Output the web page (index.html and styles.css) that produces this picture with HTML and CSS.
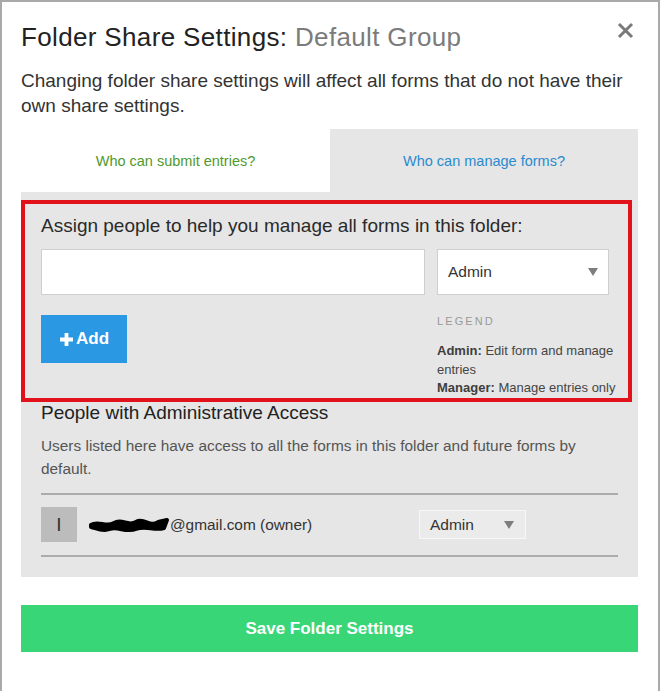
FILE: index.html
```html
<!DOCTYPE html>
<html lang="en">
<head>
<meta charset="utf-8">
<title>Folder Share Settings</title>
<link rel="stylesheet" href="styles.css">
</head>
<body>
<div class="modal">
  <header class="modal-head">
    <h1 class="title">Folder Share Settings: <span class="title-muted">Default Group</span></h1>
    <button class="close" aria-label="Close">
      <svg width="17" height="17" viewBox="0 0 17 17"><path d="M2 2 L15 15 M15 2 L2 15" stroke="#7a7a7a" stroke-width="3" stroke-linecap="butt"/></svg>
    </button>
  </header>
  <p class="intro">Changing folder share settings will affect all forms that do not have their own share settings.</p>

  <div class="panel">
    <div class="tabs">
      <div class="tab tab-active">Who can submit entries?</div>
      <div class="tab tab-manage">Who can manage forms?</div>
    </div>

    <section class="assign">
      <h2 class="assign-title">Assign people to help you manage all forms in this folder:</h2>
      <div class="assign-row">
        <div class="text-input"></div>
        <div class="select select-large"><span>Admin</span><span class="caret"></span></div>
      </div>
      <div class="assign-row2">
        <div><button class="add-btn"><svg width="13" height="13" viewBox="0 0 13 13"><path d="M4.6 0h3.8v4.6H13v3.8H8.4V13H4.6V8.4H0V4.6h4.6z" fill="#fff"/></svg>Add</button></div>
        <div class="legend">
          <div class="legend-title">LEGEND</div>
          <div class="legend-item"><b>Admin:</b> <span>Edit form and manage</span> <span>entries</span></div>
          <div class="legend-item"><b>Manager:</b> <span>Manage entries only</span></div>
        </div>
      </div>
    </section>

    <section class="admins">
      <h3 class="admins-title">People with Administrative Access</h3>
      <p class="admins-desc">Users listed here have access to all the forms in this folder and future forms by default.</p>
      <div class="user-row">
        <div class="avatar">I</div>
        <div class="email"><svg class="redact" width="82" height="18" viewBox="0 0 82 18"><path d="M3 9 C10 4, 18 12, 26 7 S40 11, 48 6 S62 12, 70 6 L79 4 L76 12 C66 15, 58 9, 48 13 S30 10, 22 13 S8 12, 3 11 Z" fill="#000" stroke="#000" stroke-width="4" stroke-linejoin="round"/></svg>@gmail.com (owner)</div>
        <div class="select select-small"><span>Admin</span><span class="caret"></span></div>
      </div>
    </section>
  </div>

  <button class="save">Save Folder Settings</button>
</div>
</body>
</html>
```
FILE: styles.css
```css
* { box-sizing: border-box; }
html, body { margin: 0; padding: 0; background: #fff; }
body { font-family: "Liberation Sans", Arial, sans-serif; color: #222; }

.modal {
  width: 660px;
  height: 691px;
  border: 2px solid #a9a9a9;
  border-bottom: none;
  padding: 20px 20px 0 19px;
  background: #fff;
}

.modal-head {
  display: flex;
  justify-content: space-between;
  align-items: flex-start;
}
.title {
  margin: 0;
  font-size: 26px;
  line-height: 30px;
  font-weight: normal;
  letter-spacing: 0.35px;
  color: #222;
}
.title-muted { color: #7b7b7b; }
.close {
  border: 0;
  background: none;
  padding: 0;
  margin: 0 4px 0 0;
  width: 17px;
  height: 17px;
  display: block;
}
.close svg { display: block; }

.intro {
  margin: 16px 0 11px;
  font-size: 19px;
  line-height: 25px;
  color: #333;
}

.panel {
  background: #e6e6e6;
  height: 448px;
  padding-bottom: 19px;
}

.tabs {
  display: grid;
  grid-template-columns: 309px 1fr;
  height: 63px;
}
.tab {
  display: flex;
  align-items: center;
  justify-content: center;
  font-size: 14.5px;
}
.tab-active { background: #fff; color: #4f9a2c; }
.tab-manage { color: #2a8bcf; }

.assign {
  margin: 8px 6px 0 0;
  border: 4px solid #e1121c;
  padding: 10px 15px 0 16px;
}
.assign-title {
  margin: 0;
  font-size: 19px;
  line-height: 23px;
  font-weight: normal;
  color: #2a2a2a;
}
.assign-row {
  display: grid;
  grid-template-columns: 384px 172px;
  gap: 12px;
  margin-top: 12px;
}
.text-input {
  height: 46px;
  background: #fff;
  border: 1px solid #cfcfcf;
}
.select {
  display: flex;
  align-items: center;
  justify-content: space-between;
  color: #333;
}
.select-large {
  height: 46px;
  background: #fff;
  border: 1px solid #cfcfcf;
  padding: 0 10px 0 10px;
  font-size: 15.5px;
}
.caret {
  width: 0;
  height: 0;
  border-left: 5px solid transparent;
  border-right: 5px solid transparent;
  border-top: 8px solid #7d7d7d;
}

.assign-row2 {
  display: grid;
  grid-template-columns: 384px 1fr;
  gap: 12px;
  margin-top: 20px;
  margin-right: -12px;
}
.add-btn {
  display: flex;
  align-items: center;
  gap: 3px;
  width: 86px;
  height: 48px;
  border: 0;
  background: #2b98e3;
  color: #fff;
  font-family: "Liberation Sans", Arial, sans-serif;
  font-weight: bold;
  font-size: 17px;
  padding: 0 0 0 19px;
}
.legend-title {
  font-size: 11px;
  line-height: 13px;
  letter-spacing: 2.1px;
  color: #9a9a9a;
  margin-bottom: 14px;
}
.legend-item {
  font-size: 13px;
  line-height: 18.7px;
  color: #454545;
}
.legend-item b { color: #3e3e3e; }

.admins {
  padding: 0 20px 0 20px;
}
.admins-title {
  margin: 0;
  font-size: 19px;
  line-height: 21px;
  font-weight: normal;
  color: #222;
}
.admins-desc {
  margin: 11px 0 13px;
  font-size: 15.4px;
  line-height: 23px;
  color: #555;
}
.user-row {
  display: grid;
  grid-template-columns: 36px 320px 107px;
  column-gap: 11px;
  align-items: center;
  border-top: 2px solid #acacac;
  border-bottom: 2px solid #acacac;
  padding: 12px 0 13px;
}
.avatar {
  width: 36px;
  height: 35px;
  background: #bcbcbc;
  color: #333;
  font-size: 19px;
  display: flex;
  align-items: center;
  justify-content: center;
}
.email {
  display: flex;
  align-items: center;
  font-size: 15.4px;
  color: #333;
}
.redact { display: block; }
.select-small {
  height: 29px;
  background: #ebebeb;
  border: 1px solid #f7f7f7;
  padding: 0 11px 0 10px;
  font-size: 15.5px;
}

.save {
  display: block;
  width: 617px;
  height: 47px;
  margin-top: 28px;
  border: 0;
  background: #39d677;
  color: #fff;
  font-family: "Liberation Sans", Arial, sans-serif;
  font-weight: bold;
  font-size: 17px;
}
```
